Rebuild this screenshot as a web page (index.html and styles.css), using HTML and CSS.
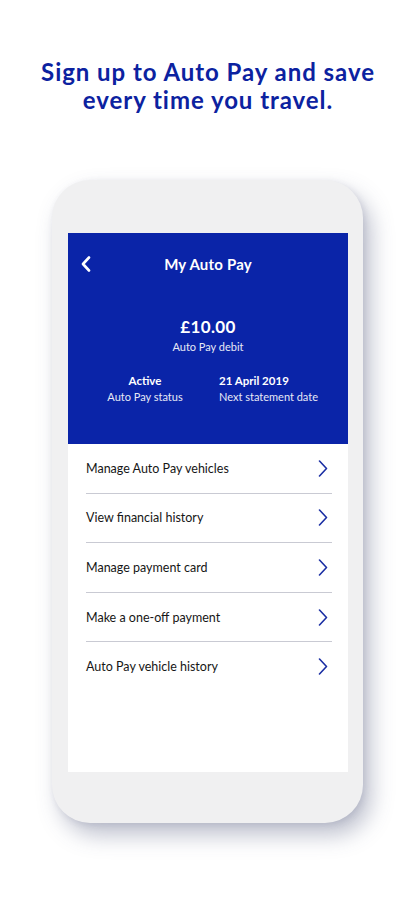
FILE: index.html
```html
<!DOCTYPE html>
<html lang="en">
<head>
    <meta charset="UTF-8">
    <meta name="viewport" content="width=device-width, initial-scale=1.0">
    <title>My Auto Pay</title>
    <link rel="stylesheet" href="styles.css">
</head>
<body>
    <div class="page">
        <h1 class="headline">Sign up to Auto Pay and save<br>every time you travel.</h1>

        <div class="phone">
            <div class="screen">
                <div class="summary">
                    <div class="topbar">
                        <svg class="back" width="10" height="16" viewBox="0 0 10 16">
                            <path d="M8 1.5 L2 8 L8 14.5" fill="none" stroke="#fff" stroke-width="2.6" stroke-linecap="round" stroke-linejoin="round"/>
                        </svg>
                        <div class="title">My Auto Pay</div>
                    </div>

                    <div class="amount">£10.00</div>
                    <div class="amount-label">Auto Pay debit</div>

                    <div class="stats">
                        <div class="stat stat-status">
                            <div class="stat-value">Active</div>
                            <div class="stat-label">Auto Pay status</div>
                        </div>
                        <div class="stat stat-date">
                            <div class="stat-value">21 April 2019</div>
                            <div class="stat-label">Next statement date</div>
                        </div>
                    </div>
                </div>

                <ul class="menu">
                    <li class="menu-item">
                        <span>Manage Auto Pay vehicles</span>
                        <svg class="chev" width="10" height="17" viewBox="0 0 10 17"><path d="M1.5 1 L8.5 8.5 L1.5 16" fill="none" stroke="#1a2ea3" stroke-width="1.6" stroke-linecap="round" stroke-linejoin="round"/></svg>
                    </li>
                    <li class="menu-item">
                        <span>View financial history</span>
                        <svg class="chev" width="10" height="17" viewBox="0 0 10 17"><path d="M1.5 1 L8.5 8.5 L1.5 16" fill="none" stroke="#1a2ea3" stroke-width="1.6" stroke-linecap="round" stroke-linejoin="round"/></svg>
                    </li>
                    <li class="menu-item">
                        <span>Manage payment card</span>
                        <svg class="chev" width="10" height="17" viewBox="0 0 10 17"><path d="M1.5 1 L8.5 8.5 L1.5 16" fill="none" stroke="#1a2ea3" stroke-width="1.6" stroke-linecap="round" stroke-linejoin="round"/></svg>
                    </li>
                    <li class="menu-item">
                        <span>Make a one-off payment</span>
                        <svg class="chev" width="10" height="17" viewBox="0 0 10 17"><path d="M1.5 1 L8.5 8.5 L1.5 16" fill="none" stroke="#1a2ea3" stroke-width="1.6" stroke-linecap="round" stroke-linejoin="round"/></svg>
                    </li>
                    <li class="menu-item last">
                        <span>Auto Pay vehicle history</span>
                        <svg class="chev" width="10" height="17" viewBox="0 0 10 17"><path d="M1.5 1 L8.5 8.5 L1.5 16" fill="none" stroke="#1a2ea3" stroke-width="1.6" stroke-linecap="round" stroke-linejoin="round"/></svg>
                    </li>
                </ul>
            </div>
        </div>
    </div>
</body>
</html>
```

FILE: styles.css
```css
body {
    margin: 0;
    padding: 0;
    background: #fff;
    font-family: "Lato", "Liberation Sans", sans-serif;
}
.page {
    width: 416px;
    height: 900px;
    overflow: hidden;
}
.headline {
    margin: 0;
    padding-top: 58px;
    text-align: center;
    color: #0c22a0;
    font-size: 24px;
    font-weight: 700;
    line-height: 28px;
    letter-spacing: 0.95px;
}
.phone {
    width: 311px;
    height: 643px;
    margin: 66px 0 0 52px;
    box-sizing: border-box;
    padding: 53px 15px 0 16px;
    background: #f0f0f1;
    border-radius: 38px;
    box-shadow: 8px 12px 22px rgba(70, 78, 115, 0.35), 2px 2px 6px rgba(70, 78, 115, 0.12);
}
.screen {
    height: 539px;
    background: #fff;
}
.summary {
    background: #0a24a8;
    color: #fff;
    height: 211px;
    box-sizing: border-box;
    padding-top: 21px;
    text-align: center;
}
.topbar {
    position: relative;
    height: 20px;
}
.back {
    position: absolute;
    left: 13px;
    top: 2px;
}
.title {
    font-size: 15px;
    font-weight: 700;
    line-height: 20px;
    letter-spacing: 0.2px;
}
.amount {
    margin-top: 41px;
    font-size: 17px;
    font-weight: 700;
    line-height: 24px;
    letter-spacing: 0.4px;
}
.amount-label {
    font-size: 11px;
    line-height: 16px;
    opacity: 0.9;
}
.stats {
    display: grid;
    grid-template-columns: 150px 130px;
    margin-top: 18px;
}
.stat-status {
    text-align: center;
    padding-left: 4px;
}
.stat-date {
    text-align: left;
    padding-left: 1px;
}
.stat-value {
    font-size: 11.5px;
    font-weight: 700;
    line-height: 16px;
}
.stat-label {
    font-size: 11px;
    line-height: 16px;
    opacity: 0.9;
}
.menu {
    list-style: none;
    margin: 0;
    padding: 0 16px 0 18px;
}
.menu-item {
    display: flex;
    align-items: center;
    justify-content: space-between;
    height: 48.6px;
    padding-right: 4px;
    border-bottom: 1px solid #c9cad3;
    font-size: 12.5px;
    color: #161616;
    letter-spacing: 0;
}
.menu-item.last {
    border-bottom: none;
}
.chev {
    flex-shrink: 0;
}
```
